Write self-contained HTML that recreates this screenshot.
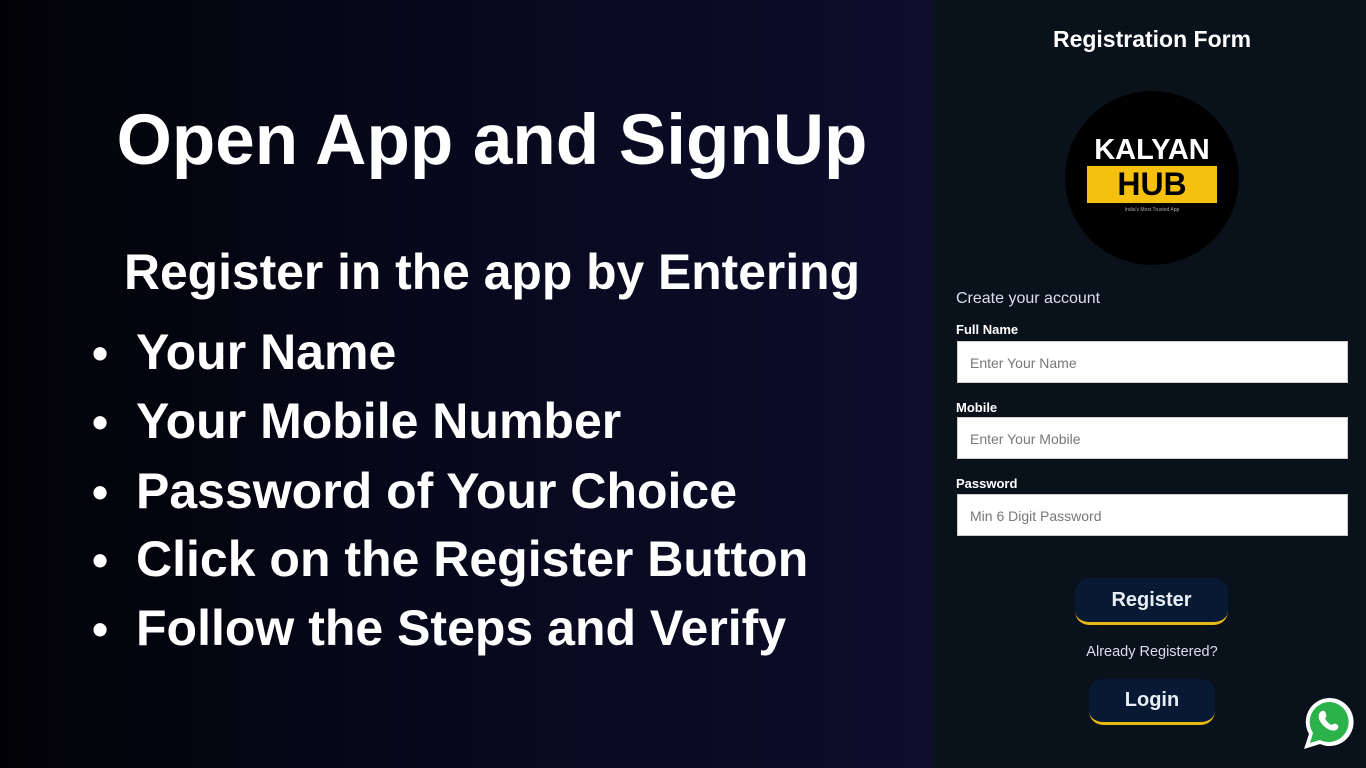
<!DOCTYPE html>
<html><head><style>
*{margin:0;padding:0;box-sizing:border-box}
body{width:1366px;height:768px;overflow:hidden;position:relative;font-family:"Liberation Sans",sans-serif;background:#000}
#left{position:absolute;left:0;top:0;width:934px;height:768px;background:linear-gradient(90deg,#020206 0%,#07071a 40%,#0e0d2c 100%)}
#left .t{position:absolute;left:0;width:984px;text-align:center;color:#fff;font-weight:bold;white-space:nowrap}
.b{position:absolute;left:92px;color:#fff;font-weight:bold;font-size:50px;white-space:nowrap}
.b span{display:inline-block;width:44px;font-size:46px}
#right{position:absolute;left:934px;top:0;width:432px;height:768px;background:#09111b}
.lbl{position:absolute;left:22px;color:#fff;font-weight:bold;font-size:13px}
.inp{position:absolute;left:23px;width:391px;height:42px;background:#fff;border:1px solid #ccc;color:#777;font-size:14px;padding:13px 12px}
.btn{position:absolute;background:#081a33;border-radius:14px;border-bottom:3px solid #e8b912;color:#e8eef5;font-weight:bold;font-size:20px;text-align:center}
</style></head><body>
<div id="left">
<div class="t" style="top:100px;font-size:71px;left:0">Open App and SignUp</div>
<div class="t" style="top:243px;font-size:49.8px;left:0">Register in the app by Entering</div>
<div class="b" style="top:323px"><span>•</span>Your Name</div>
<div class="b" style="top:392px"><span>•</span>Your Mobile Number</div>
<div class="b" style="top:462px"><span>•</span>Password of Your Choice</div>
<div class="b" style="top:530px"><span>•</span>Click on the Register Button</div>
<div class="b" style="top:599px"><span>•</span>Follow the Steps and Verify</div>
</div>
<div id="right">
<div style="position:absolute;top:26px;left:0;width:436px;text-align:center;color:#fff;font-weight:bold;font-size:23px">Registration Form</div>
<div style="position:absolute;left:131px;top:91px;width:174px;height:174px;border-radius:50%;background:#000"></div>
<div style="position:absolute;left:131px;top:134px;width:174px;text-align:center;color:#fff;font-size:29px;font-weight:bold">KALYAN</div>
<div style="position:absolute;left:153px;top:166px;width:130px;height:37px;background:#f5c10e;color:#000;font-size:32px;font-weight:bold;text-align:center;line-height:37px">HUB</div>
<div style="position:absolute;left:131px;top:207px;width:174px;text-align:center;color:#aaa;font-size:5px">India's Most Trusted App</div>
<div style="position:absolute;left:22px;top:290px;color:#dde;font-size:16px">Create your account</div>
<div class="lbl" style="top:322px">Full Name</div>
<div class="inp" style="top:341px">Enter Your Name</div>
<div class="lbl" style="top:400px">Mobile</div>
<div class="inp" style="top:417px">Enter Your Mobile</div>
<div class="lbl" style="top:476px">Password</div>
<div class="inp" style="top:494px">Min 6 Digit Password</div>
<div class="btn" style="left:141px;top:578px;width:153px;height:47px;line-height:44px">Register</div>
<div style="position:absolute;left:0;top:644px;width:436px;text-align:center;color:#dde;font-size:14.5px">Already Registered?</div>
<div class="btn" style="left:155px;top:679px;width:126px;height:46px;line-height:42px">Login</div>
<svg style="position:absolute;left:368px;top:695px" width="56" height="56" viewBox="0 0 56 56">
<path d="M28 3a24 24 0 0 0-21 36l-5 15 16-5a24 24 0 1 0 10-46z" fill="#fff"/>
<path d="M28 7a20 20 0 0 0-17 31l-3 10 10-3a20 20 0 1 0 10-38z" fill="#2bb24a"/>
<path d="M20 16c2-1 3 0 4 3s0 3-1 4c1 3 4 6 7 7 1-1 2-2 4-1s3 2 2 4c-1 3-5 3-8 2-5-2-9-6-11-11-1-3 0-7 3-8z" fill="#fff"/>
</svg>
</div>
</body></html>
